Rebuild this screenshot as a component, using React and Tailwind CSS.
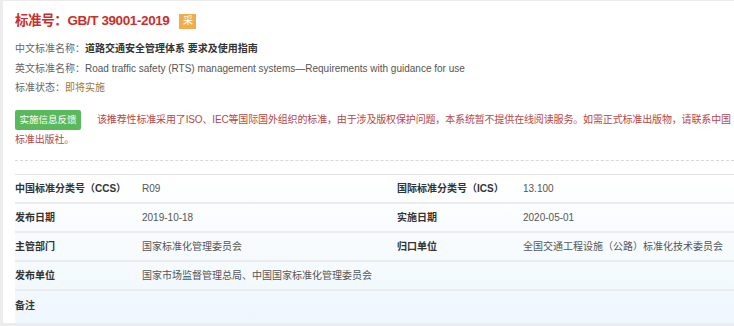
export default function App() {
    const rows = [
        ['中国标准分类号（CCS）', 'R09', '国际标准分类号（ICS）', '13.100'],
        ['发布日期', '2019-10-18', '实施日期', '2020-05-01'],
        ['主管部门', '国家标准化管理委员会', '归口单位', '全国交通工程设施（公路）标准化技术委员会'],
        ['发布单位', '国家市场监督管理总局、中国国家标准化管理委员会', '', ''],
        ['备注', '', '', ''],
    ]

    return (
        <div className="w-[734px] h-[326px] bg-[#ececec] pl-[3px] pt-px pb-[3px] overflow-hidden font-['Liberation_Sans','Noto_Sans_CJK_SC',sans-serif]">
            <div className="h-full bg-white flex flex-col">
                {/* Title */}
                <div className="flex items-center gap-[10px] pl-3 pt-[12px] h-[28px]">
                    <h1 className="text-[13.5px] font-bold text-[#c9302c] leading-none tracking-[-0.4px]">标准号：GB/T 39001-2019</h1>
                    <span className="bg-[#f0ad4e] text-white text-[10px] leading-none w-[17px] h-[15px] flex items-center justify-center">采</span>
                </div>

                {/* Names */}
                <div className="pl-3 pt-[10px] text-[10px] text-[#666] leading-[19.5px]">
                    <p>中文标准名称：<span className="font-bold text-[#333]">道路交通安全管理体系 要求及使用指南</span></p>
                    <p>英文标准名称：<span className="text-[#555]">Road traffic safety (RTS) management systems—Requirements with guidance for use</span></p>
                    <p>标准状态：<span className="text-[#9c7636]">即将实施</span></p>
                </div>

                {/* Notice */}
                <div className="pl-3 pr-[2px] pt-[12px] text-[10px] leading-[20px] text-[#b5474a] tracking-[-0.15px]">
                    <button className="float-left bg-[#5cb85c] text-white text-[9.5px] tracking-normal rounded-[2px] w-[66px] h-[20px] leading-[20px] mr-[16px]">实施信息反馈</button>
                    <p>该推荐性标准采用了ISO、IEC等国际国外组织的标准，由于涉及版权保护问题，本系统暂不提供在线阅读服务。如需正式标准出版物，请联系中国标准出版社。</p>
                </div>

                <div className="ml-3 mt-[10px] border-t border-dashed border-[#d8d8d8]" />

                {/* Info table */}
                <div className="ml-3 mt-[13px] flex-1 border-t border-[#e3e3e3] bg-gradient-to-b from-white to-[#eef7fd] text-[10px]">
                    {rows.map((r, i) => (
                        <div key={i} className={`flex items-center h-[29px] ${i === rows.length - 1 ? '' : 'border-b-2 border-[#ececec]'}`}>
                            <div className="w-[127px] font-bold text-[#333]">{r[0]}</div>
                            <div className="w-[255px] text-[#555]">{r[1]}</div>
                            <div className="w-[126px] font-bold text-[#333]">{r[2]}</div>
                            <div className="text-[#555]">{r[3]}</div>
                        </div>
                    ))}
                </div>
            </div>
        </div>
    )
}
